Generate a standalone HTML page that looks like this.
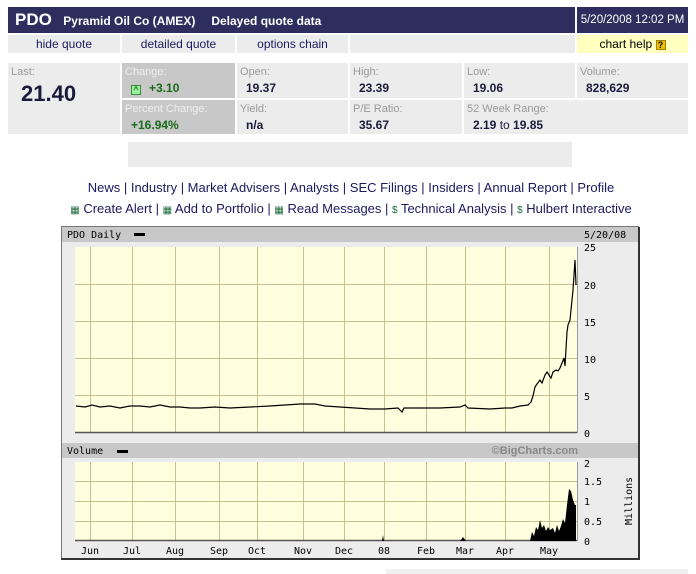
<!DOCTYPE html>
<html><head><meta charset="utf-8"><style>
*{margin:0;padding:0;box-sizing:border-box}
body{width:696px;height:574px;background:#fff;position:relative;overflow:hidden;font-family:"Liberation Sans",Arial,sans-serif;color:#000}
.a{position:absolute}
.c{background:#ececec}
.lbl{font-size:11px;color:#999;position:absolute;left:3px;top:3px}
.val{font-size:12px;font-weight:bold;color:#1a1a3a;position:absolute;left:9px;top:18px}
.nav{font-size:12px;color:#1a1a5e;text-align:center;line-height:18px}
.links{font-size:13px;color:#1a1a5e;position:absolute;left:0;width:702px;text-align:center;white-space:nowrap}
.ic{color:#1a6a3a;font-size:10px}
.mono{font-family:"DejaVu Sans Mono","Liberation Mono",monospace;font-size:10px}
</style></head><body>
<div class="a" style="left:8px;top:7px;width:567px;height:26px;background:#2e2e5e"></div>
<div class="a" style="left:577px;top:7px;width:111px;height:26px;background:#2e2e5e;color:#fff;font-size:11.5px;line-height:26px;text-align:center">5/20/2008 12:02 PM</div>
<div class="a" style="left:15px;top:7px;height:26px;line-height:26px;color:#fff;font-weight:bold;white-space:nowrap"><span style="font-size:17px">PDO</span> <span style="font-size:12px;margin-left:7px">Pyramid Oil Co (AMEX)</span><span style="font-size:12px;margin-left:16px">Delayed quote data</span></div>
<div class="a c nav" style="left:8px;top:35px;width:112px;height:18px">hide quote</div>
<div class="a c nav" style="left:122px;top:35px;width:113px;height:18px">detailed quote</div>
<div class="a c nav" style="left:237px;top:35px;width:111px;height:18px">options chain</div>
<div class="a c" style="left:350px;top:35px;width:225px;height:18px"></div>
<div class="a nav" style="left:577px;top:35px;width:111px;height:18px;background:#ffffc0;color:#000">chart help <span style="display:inline-block;width:10px;height:10px;background:#f0c000;border:1px solid #a08000;font-size:9px;line-height:8px;font-weight:bold;vertical-align:middle">?</span></div>

<div class="a c" style="left:8px;top:63px;width:112px;height:71px"><span class="lbl">Last:</span><span style="position:absolute;left:13px;top:18px;font-size:22px;font-weight:bold;color:#1a1a3a">21.40</span></div>
<div class="a" style="left:122px;top:63px;width:113px;height:35px;background:#c8c8c8"><span class="lbl" style="color:#eee">Change:</span><span class="val" style="color:#1a6a1a"><span style="display:inline-block;width:10px;height:10px;border:1px solid #3a8a3a;background:#9e9;font-size:8px;line-height:8px;text-align:center;margin-right:8px">^</span>+3.10</span></div>
<div class="a" style="left:122px;top:100px;width:113px;height:34px;background:#c8c8c8"><span class="lbl" style="color:#eee">Percent Change:</span><span class="val" style="color:#1a6a1a">+16.94%</span></div>
<div class="a c" style="left:237px;top:63px;width:111px;height:35px"><span class="lbl">Open:</span><span class="val">19.37</span></div>
<div class="a c" style="left:237px;top:100px;width:111px;height:34px"><span class="lbl">Yield:</span><span class="val">n/a</span></div>
<div class="a c" style="left:350px;top:63px;width:112px;height:35px"><span class="lbl">High:</span><span class="val">23.39</span></div>
<div class="a c" style="left:350px;top:100px;width:112px;height:34px"><span class="lbl">P/E Ratio:</span><span class="val">35.67</span></div>
<div class="a c" style="left:464px;top:63px;width:111px;height:35px"><span class="lbl">Low:</span><span class="val">19.06</span></div>
<div class="a c" style="left:464px;top:100px;width:224px;height:34px"><span class="lbl">52 Week Range:</span><span class="val">2.19 <span style="font-weight:normal">to</span> 19.85</span></div>
<div class="a c" style="left:577px;top:63px;width:111px;height:35px"><span class="lbl">Volume:</span><span class="val">828,629</span></div>
<div class="a c" style="left:128px;top:142px;width:444px;height:25px"></div>

<div class="links" style="top:180px">News | Industry | Market Advisers | Analysts | SEC Filings | Insiders | Annual Report | Profile</div>
<div class="links" style="top:201px"><span class="ic">▦</span> Create Alert | <span class="ic">▦</span> Add to Portfolio | <span class="ic">▦</span> Read Messages | <span class="ic">$</span> Technical Analysis | <span class="ic">$</span> Hulbert Interactive</div>

<svg class="a" style="left:0;top:0" width="696" height="574">
<rect x="61.5" y="226.5" width="577" height="332" fill="#ececec" stroke="#777"/>
<rect x="62" y="227" width="576" height="15" fill="#c8c8c8"/>
<rect x="62" y="443" width="576" height="15" fill="#c8c8c8"/>
<rect x="638" y="227" width="2" height="332" fill="#333"/>
<rect x="61" y="558" width="579" height="2" fill="#333"/>
<text x="67" y="238" class="mono">PDO Daily</text><rect x="134" y="233" width="11" height="3" fill="#000"/>
<text x="584" y="238" class="mono">5/20/08</text>
<text x="67" y="454" class="mono">Volume</text><rect x="117" y="450" width="11" height="3" fill="#000"/>
<text x="578" y="454" text-anchor="end" font-family="Liberation Sans" font-weight="bold" font-size="11" fill="#888">©BigCharts.com</text>
<rect x="75" y="247" width="502" height="186" fill="#ffffe0"/>
<rect x="75" y="462" width="502" height="79" fill="#ffffe0"/>
<g stroke="#c8c090" stroke-width="1">
<path d="M90.5 247V433M132.5 247V433M175.5 247V433M219.5 247V433M257.5 247V433M303.5 247V433M344.5 247V433M384.5 247V433M426.5 247V433M465.5 247V433M505.5 247V433M549.5 247V433"/>
<path d="M75 284.5H577M75 321.5H577M75 358.5H577M75 395.5H577"/>
<path d="M90.5 462V541M132.5 462V541M175.5 462V541M219.5 462V541M257.5 462V541M303.5 462V541M344.5 462V541M384.5 462V541M426.5 462V541M465.5 462V541M505.5 462V541M549.5 462V541"/>
<path d="M75 481.5H577M75 501.5H577M75 521.5H577"/>
</g>
<path d="M75 432.5H577M75 540.5H577" stroke="#555" stroke-width="1.5"/>
<path d="M577.5 247V433M577.5 462V541" stroke="#999"/>
<polyline fill="none" stroke="#000" stroke-width="1.2" points="76,406 85,407 92,405 100,407 110,406 120,408 130,406 140,406 150,407 160,405 170,407 180,407 190,408 200,408 215,407 230,408 250,407 270,406 285,405 300,404 315,404 325,406 340,407 355,408 370,409 385,409 398,408 402,412 404,408 420,408 440,408 460,407 465,405 468,408 490,409 505,408 512,408 520,406 528,405 531,402 533,396 535,387 537,384 540,380 542,383 545,375 547,372 549,375 551,378 553,372 556,370 558,371 560,368 562,363 564,358 565,366 567,332 568,325 570,320 571,310 573,290 574,275 575,260 576,285"/>
<path d="M75 541L380 541L382 541L383 535L384 541L460 541L463 537L466 541L530 541L532 532L534 536L536 527L538 530L540 520L542 528L544 525L546 531L548 527L550 530L553 528L555 533L557 525L559 531L561 526L563 519L565 523L567 505L569 489L571 491L573 500L575 505L576 505L576 541Z" fill="#000"/>
<g font-family="DejaVu Sans Mono,monospace" font-size="10" fill="#000">
<text x="584" y="251">25</text><text x="584" y="289">20</text><text x="584" y="326">15</text><text x="584" y="363">10</text><text x="584" y="400">5</text><text x="584" y="437">0</text>
<text x="584" y="467">2</text><text x="584" y="485">1.5</text><text x="584" y="505">1</text><text x="584" y="525">0.5</text><text x="584" y="545">0</text>
<text transform="translate(632,525) rotate(-90)">Millions</text>
<g text-anchor="middle"><text x="90" y="554">Jun</text><text x="132" y="554">Jul</text><text x="175" y="554">Aug</text><text x="219" y="554">Sep</text><text x="257" y="554">Oct</text><text x="303" y="554">Nov</text><text x="344" y="554">Dec</text><text x="384" y="554">08</text><text x="426" y="554">Feb</text><text x="465" y="554">Mar</text><text x="505" y="554">Apr</text><text x="549" y="554">May</text></g>
</g>
<rect x="386" y="569" width="302" height="5" fill="#f0f0f0"/>
</svg>
</body></html>
